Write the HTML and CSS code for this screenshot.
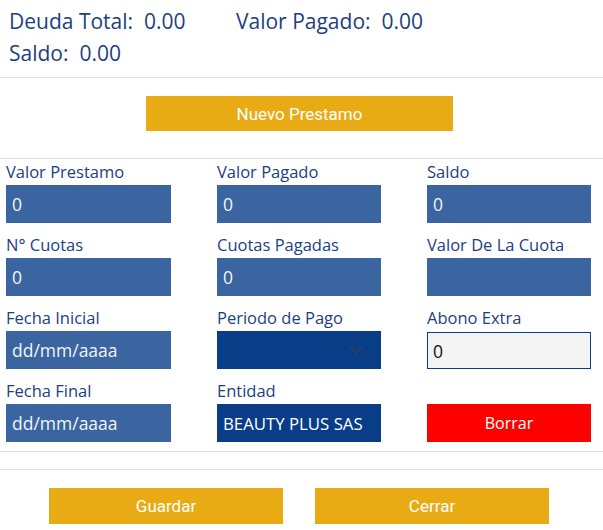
FILE: index.html
```html
<!DOCTYPE html>
<html lang="es">
<head>
<meta charset="utf-8">
<title>Prestamos</title>
<link rel="stylesheet" href="styles.css">
</head>
<body>
<div class="summary">
  <div class="stat">Deuda Total:&nbsp; 0.00</div>
  <div class="stat">Valor Pagado:&nbsp; 0.00</div>
  <div class="stat">Saldo:&nbsp; 0.00</div>
</div>
<div class="new-row">
  <button class="btn gold new-btn">Nuevo Prestamo</button>
</div>
<div class="fields">
  <div class="field"><label>Valor Prestamo</label><input class="inp" type="text" value="0"></div>
  <div class="field"><label>Valor Pagado</label><input class="inp" type="text" value="0"></div>
  <div class="field"><label>Saldo</label><input class="inp" type="text" value="0"></div>

  <div class="field"><label>N° Cuotas</label><input class="inp" type="text" value="0"></div>
  <div class="field"><label>Cuotas Pagadas</label><input class="inp" type="text" value="0"></div>
  <div class="field"><label>Valor De La Cuota</label><input class="inp" type="text" value=""></div>

  <div class="field"><label>Fecha Inicial</label><input class="inp" type="text" value="dd/mm/aaaa"></div>
  <div class="field"><label>Periodo de Pago</label>
    <div class="select">
      <svg class="chev" width="14" height="8" viewBox="0 0 14 8"><path d="M1 1 L7 7 L13 1" fill="none" stroke="#3a3f4a" stroke-width="1.6"/></svg>
    </div>
  </div>
  <div class="field"><label>Abono Extra</label><input class="inp light" type="text" value="0"></div>

  <div class="field"><label>Fecha Final</label><input class="inp" type="text" value="dd/mm/aaaa"></div>
  <div class="field"><label>Entidad</label><input class="inp dark" type="text" value="BEAUTY PLUS SAS"></div>
  <div class="field"><span class="spacer"></span><button class="btn red">Borrar</button></div>
</div>
<div class="gap-row"></div>
<div class="footer">
  <button class="btn gold foot-btn">Guardar</button>
  <button class="btn gold foot-btn">Cerrar</button>
</div>
</body>
</html>
```
FILE: styles.css
```css
html, body {
  margin: 0;
  padding: 0;
  background: #ffffff;
}
body {
  font-family: "Open Sans", "Noto Sans", sans-serif;
  color: #1b3f7f;
  width: 603px;
}
.summary {
  display: grid;
  grid-template-columns: 227px auto;
  padding: 5px 9px 8px 9px;
  border-bottom: 1px solid #dedede;
  font-size: 21px;
  line-height: 32px;
}
.new-row {
  display: flex;
  justify-content: center;
  padding: 18px 4px 27px 0;
  border-bottom: 1px solid #dedede;
}
.btn {
  border: none;
  margin: 0;
  color: #ffffff;
  font-family: "Roboto", "Open Sans", sans-serif;
  font-size: 17px;
  cursor: pointer;
  padding: 0;
}
.gold { background: #e8ab13; }
.new-btn { width: 307px; height: 35px; }
.fields {
  display: grid;
  grid-template-columns: 165px 164px 164px;
  column-gap: 46px;
  row-gap: 11px;
  padding: 2px 0 9px 6px;
  border-bottom: 1px solid #dedede;
}
.field {
  display: flex;
  flex-direction: column;
}
.field label, .spacer {
  display: block;
  font-size: 16.5px;
  line-height: 22px;
  height: 22px;
  margin-bottom: 2px;
  color: #1b3f7f;
  white-space: nowrap;
}
.inp {
  box-sizing: border-box;
  height: 38px;
  width: 100%;
  border: none;
  margin: 0;
  background: #3a65a0;
  color: #f4f4f4;
  font-family: "Open Sans", sans-serif;
  font-size: 17.5px;
  padding: 0 6px;
  outline: none;
}
.inp.dark { background: #0a3d88; color: #ffffff; font-size: 16.8px; }
.inp.light {
  background: #f3f3f3;
  color: #111111;
  border: 1px solid #0a3d88;
  height: 37px;
  margin-top: 1px;
  padding: 0 5px;
}
.select {
  box-sizing: border-box;
  height: 38px;
  background: #0a3d88;
  display: flex;
  align-items: center;
  justify-content: flex-end;
  padding-right: 18px;
}
.chev { display: block; }
.red {
  background: #ff0000;
  height: 38px;
  width: 100%;
  font-family: "Open Sans", sans-serif;
  font-size: 16px;
}
.gap-row {
  height: 17px;
  border-bottom: 1px solid #dedede;
}
.footer {
  display: flex;
  justify-content: center;
  gap: 32px;
  padding: 18px 5px 0 0;
}
.foot-btn { width: 234px; height: 36px; font-size: 17px; }
```
